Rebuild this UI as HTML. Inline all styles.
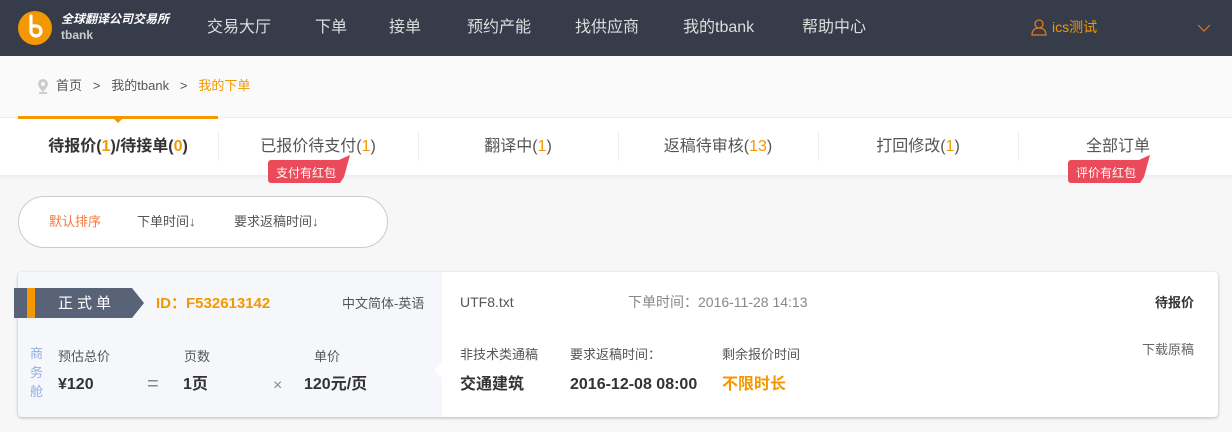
<!DOCTYPE html>
<html><head><meta charset="utf-8"><style>
*{margin:0;padding:0;box-sizing:border-box}
body{width:1232px;height:432px;overflow:hidden;background:#f7f7f7;font-family:"Liberation Sans","Noto Sans CJK SC",sans-serif;position:relative;color:#333}
.a{position:absolute;white-space:nowrap;line-height:1}
.o{color:#f39800}
</style></head><body>
<div class="a" style="left:0;top:0;width:1232px;height:56px;background:#363c4a"></div>
<svg class="a" style="left:18px;top:11px" width="34" height="34" viewBox="0 0 34 34"><circle cx="17" cy="17" r="17" fill="#f39800"/><path d="M13 5v15a5 5 0 1 0 5-5h-5" fill="none" stroke="#fff" stroke-width="3.2" stroke-linecap="round"/></svg>
<div class="a" style="left:61px;top:13px;color:#fff;font-size:12px;font-weight:bold;font-style:italic">全球翻译公司交易所</div>
<div class="a" style="left:61px;top:29px;color:#ccc;font-size:12px;font-weight:bold">tbank</div>
<div class="a" style="left:207px;top:20px;color:#ddd;font-size:16px">交易大厅</div>
<div class="a" style="left:315px;top:20px;color:#ddd;font-size:16px">下单</div>
<div class="a" style="left:389px;top:20px;color:#ddd;font-size:16px">接单</div>
<div class="a" style="left:467px;top:20px;color:#ddd;font-size:16px">预约产能</div>
<div class="a" style="left:575px;top:20px;color:#ddd;font-size:16px">找供应商</div>
<div class="a" style="left:683px;top:20px;color:#ddd;font-size:16px">我的tbank</div>
<div class="a" style="left:802px;top:20px;color:#ddd;font-size:16px">帮助中心</div>
<svg class="a" style="left:1031px;top:19px" width="16" height="17" viewBox="0 0 16 17"><circle cx="8" cy="5" r="4" fill="none" stroke="#e6781e" stroke-width="1.3"/><path d="M1 16c0-5 3-7 7-7s7 2 7 7z" fill="none" stroke="#e6781e" stroke-width="1.3"/></svg>
<div class="a" style="left:1052px;top:20px;color:#f39800;font-size:14px">ics测试</div>
<svg class="a" style="left:1197px;top:24px" width="14" height="9"><path d="M1 1l6 6 6-6" fill="none" stroke="#e6781e" stroke-width="1.2"/></svg>
<div class="a" style="left:0;top:56px;width:1232px;height:61px;background:#fafafa"></div>
<svg class="a" style="left:38px;top:79px" width="10" height="15"><path d="M5 0a5 5 0 0 0-5 5c0 3 5 8 5 8s5-5 5-8a5 5 0 0 0-5-5z" fill="#ccc"/><circle cx="5" cy="5" r="2" fill="#fafafa"/><rect x="1" y="13" width="8" height="2" fill="#ccc"/></svg>
<div class="a" style="left:56px;top:79px;font-size:13px;color:#555">首页&nbsp;&nbsp;&nbsp;&gt;&nbsp;&nbsp;&nbsp;我的tbank&nbsp;&nbsp;&nbsp;&gt;&nbsp;&nbsp;&nbsp;<span class="o">我的下单</span></div>
<div class="a" style="left:0;top:117px;width:1232px;height:58px;background:#fff;box-shadow:0 2px 4px rgba(0,0,0,.05);border-top:1px solid #eee"></div>
<div class="a" style="left:18px;top:116px;width:200px;height:3px;background:#f39800"></div>
<div class="a" style="left:114px;top:119px;border:4px solid transparent;border-top-color:#f39800"></div>
<div class="a" style="left:18px;top:139px;width:200px;text-align:center;font-size:16px;font-weight:bold">待报价(<span class="o">1</span>)/待接单(<span class="o">0</span>)</div>
<div class="a" style="left:218px;top:139px;width:200px;text-align:center;font-size:16px;color:#555">已报价待支付(<span class="o">1</span>)</div>
<div class="a" style="left:418px;top:139px;width:200px;text-align:center;font-size:16px;color:#555">翻译中(<span class="o">1</span>)</div>
<div class="a" style="left:618px;top:139px;width:200px;text-align:center;font-size:16px;color:#555">返稿待审核(<span class="o">13</span>)</div>
<div class="a" style="left:818px;top:139px;width:200px;text-align:center;font-size:16px;color:#555">打回修改(<span class="o">1</span>)</div>
<div class="a" style="left:1018px;top:139px;width:200px;text-align:center;font-size:16px;color:#555">全部订单</div>
<div class="a" style="left:218px;top:131px;width:1px;height:30px;background:#eee"></div>
<div class="a" style="left:418px;top:131px;width:1px;height:30px;background:#eee"></div>
<div class="a" style="left:618px;top:131px;width:1px;height:30px;background:#eee"></div>
<div class="a" style="left:818px;top:131px;width:1px;height:30px;background:#eee"></div>
<div class="a" style="left:1018px;top:131px;width:1px;height:30px;background:#eee"></div>
<svg class="a" style="left:268px;top:155px" width="84" height="30"><path d="M3 5h68l11-5-6 22-4 6H3a3 3 0 0 1-3-3V8a3 3 0 0 1 3-3z" fill="#ea4a5a"/><text x="8" y="22" font-size="12" fill="#fff" font-family="Liberation Sans,Noto Sans CJK SC,sans-serif">支付有红包</text></svg>
<svg class="a" style="left:1068px;top:155px" width="84" height="30"><path d="M3 5h68l11-5-6 22-4 6H3a3 3 0 0 1-3-3V8a3 3 0 0 1 3-3z" fill="#ea4a5a"/><text x="8" y="22" font-size="12" fill="#fff" font-family="Liberation Sans,Noto Sans CJK SC,sans-serif">评价有红包</text></svg>
<div class="a" style="left:18px;top:196px;width:370px;height:52px;border:1px solid #ccc;border-radius:26px;background:#fff"></div>
<div class="a" style="left:49px;top:215px;font-size:13px;color:#f47a3c">默认排序</div>
<div class="a" style="left:137px;top:215px;font-size:13px;color:#555">下单时间↓</div>
<div class="a" style="left:234px;top:215px;font-size:13px;color:#555">要求返稿时间↓</div>
<div class="a" style="left:18px;top:272px;width:1200px;height:145px;background:#fff;border-radius:4px;box-shadow:0 1px 3px rgba(0,0,0,.25)"></div>
<div class="a" style="left:18px;top:272px;width:424px;height:145px;background:#f5f7fb;border-radius:4px 0 0 4px"></div>
<div class="a" style="left:434px;top:362px;border:8px solid transparent;border-right-color:#fff;border-left:0"></div>
<svg class="a" style="left:14px;top:288px" width="132" height="30"><path d="M0 0h118l12 15-12 15H0z" fill="#596378"/><rect x="13" y="0" width="8" height="30" fill="#f39800"/><text x="44" y="20" font-size="15" fill="#fff" letter-spacing="4" font-family="Liberation Sans,Noto Sans CJK SC,sans-serif">正式单</text></svg>
<div class="a" style="left:156px;top:296px;font-size:15px;font-weight:bold"><span class="o">ID：F532613142</span></div>
<div class="a" style="left:342px;top:297px;font-size:13px;color:#555">中文简体-英语</div>
<div class="a" style="left:30px;top:344px;width:14px;font-size:13px;line-height:19px;color:#8fb0e0;white-space:normal">商务舱</div>
<div class="a" style="left:58px;top:350px;font-size:13px;color:#555">预估总价</div>
<div class="a" style="left:184px;top:350px;font-size:13px;color:#555">页数</div>
<div class="a" style="left:314px;top:350px;font-size:13px;color:#555">单价</div>
<div class="a" style="left:58px;top:377px;font-size:16px;font-weight:bold">¥120</div>
<div class="a" style="left:147px;top:374px;font-size:20px;color:#888">=</div>
<div class="a" style="left:183px;top:377px;font-size:16px;font-weight:bold">1页</div>
<div class="a" style="left:273px;top:378px;font-size:16px;color:#888">×</div>
<div class="a" style="left:304px;top:377px;font-size:16px;font-weight:bold">120元/页</div>
<div class="a" style="left:460px;top:295px;font-size:14px;color:#555">UTF8.txt</div>
<div class="a" style="left:628px;top:295px;font-size:14px;color:#888">下单时间：2016-11-28 14:13</div>
<div class="a" style="left:1155px;top:296px;font-size:13px;font-weight:bold">待报价</div>
<div class="a" style="left:460px;top:348px;font-size:13px;color:#555">非技术类通稿</div>
<div class="a" style="left:570px;top:348px;font-size:13px;color:#555">要求返稿时间：</div>
<div class="a" style="left:722px;top:348px;font-size:13px;color:#555">剩余报价时间</div>
<div class="a" style="left:1142px;top:343px;font-size:13px;color:#666">下载原稿</div>
<div class="a" style="left:460px;top:377px;font-size:16px;font-weight:bold">交通建筑</div>
<div class="a" style="left:570px;top:377px;font-size:16px;font-weight:bold">2016-12-08 08:00</div>
<div class="a" style="left:722px;top:377px;font-size:16px;font-weight:bold;color:#f39800">不限时长</div>
</body></html>
